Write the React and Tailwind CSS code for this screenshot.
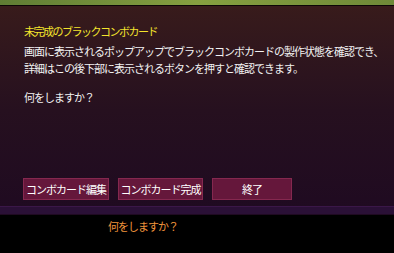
export default function App() {
  const font = { fontFamily: '"Noto Sans CJK JP", "Noto Sans", sans-serif' };
  return (
    <div className="w-[394px] h-[253px] flex flex-col bg-black overflow-hidden" style={font}>
      {/* game background peeking through at the top */}
      <div className="h-[5px] bg-gradient-to-r from-[#5f7d34] via-[#86a040] to-[#6f8a38]" />
      <div className="h-px bg-[#0c0606]" />

      {/* dialog panel */}
      <div className="h-[209px] flex flex-col bg-gradient-to-b from-[#381b1b] via-[#26101f] to-[#1f0a21]">
        <div className="pl-[24px] pt-[16px] text-[11px] leading-[18px] tracking-[-1.5px] text-[#f4e52c]">
          未完成のブラックコンボカード
        </div>
        <div className="pl-[24px] mt-[3px] text-[11px] leading-[17px] tracking-[-1px] text-[#f2f2f2]">
          <div>画面に表示されるポップアップでブラックコンボカードの製作状態を確認でき、</div>
          <div>詳細はこの後下部に表示されるボタンを押すと確認できます。</div>
          <div className="mt-[12px]">何をしますか？</div>
        </div>

        <div className="flex pl-[23px] gap-[9px] mt-[72px]">
          <button className="w-[86px] h-[22px] border border-[#85284f] bg-[#65173b] text-[11px] tracking-[-1px] text-white">
            コンボカード編集
          </button>
          <button className="w-[85px] h-[22px] border border-[#85284f] bg-[#65173b] text-[11px] tracking-[-1px] text-white">
            コンボカード完成
          </button>
          <button className="w-[80px] h-[22px] border border-[#85284f] bg-[#65173b] text-[11px] tracking-[-1px] text-white">
            終了
          </button>
        </div>

        <div className="mt-[6px] h-[8px] border-t border-[#3a1748] bg-[#2a1036]" />
      </div>

      {/* status line */}
      <div className="pl-[108px] pt-[3px] text-[11px] leading-[17px] tracking-[-1px] text-[#f0943c]">
        何をしますか？
      </div>
    </div>
  );
}
